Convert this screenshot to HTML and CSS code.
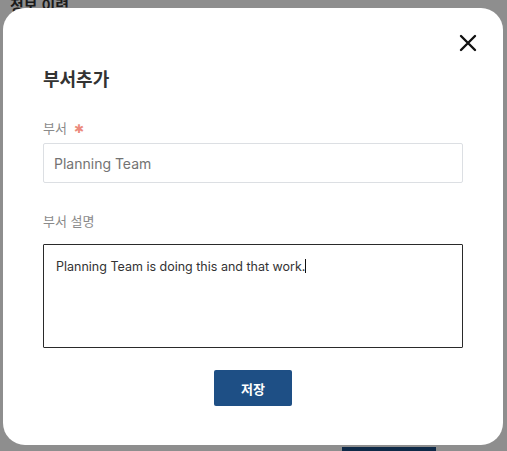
FILE: index.html
```html
<!DOCTYPE html>
<html lang="ko">
<head>
<meta charset="utf-8">
<link rel="stylesheet" href="styles.css">
</head>
<body>
<div class="page">
  <div class="page-title">정보 이력</div>
  <div class="page-btn"></div>
</div>
<div class="overlay">
  <div class="modal">
    <div class="modal-head">
      <button class="close" aria-label="닫기">
        <svg width="18" height="18" viewBox="0 0 18 18"><path d="M2 2L16 16M16 2L2 16" stroke="#111" stroke-width="2.4" stroke-linecap="round"/></svg>
      </button>
    </div>
    <h2 class="title">부서추가</h2>
    <div class="field">
      <label class="label">부서 <span class="req">✱</span></label>
      <div class="input">Planning Team</div>
    </div>
    <div class="field field-2">
      <label class="label">부서 설명</label>
      <div class="textarea">Planning Team is doing this and that work.<span class="caret"></span></div>
    </div>
    <div class="actions">
      <button class="save">저장</button>
    </div>
  </div>
</div>
</body>
</html>
```
FILE: styles.css
```css
* { box-sizing: border-box; }
html, body { margin: 0; padding: 0; }
body {
  width: 507px;
  height: 451px;
  overflow: hidden;
  background: #8e8e8e;
  font-family: Inter, "Noto Sans CJK KR", sans-serif;
  position: relative;
}
.page { position: relative; height: 451px; }
.page-title {
  position: absolute;
  left: 10px;
  top: -6px;
  font-size: 15px;
  font-weight: 600;
  color: #1b1b1b;
}
.page-btn {
  position: absolute;
  left: 342px;
  top: 447px;
  width: 94px;
  height: 10px;
  background: #0f2a48;
}
.overlay {
  position: absolute;
  left: 3px;
  top: 8px;
}
.modal {
  width: 500px;
  height: 437px;
  background: #fff;
  border-radius: 22px;
  padding: 24px 40px 0 40px;
  display: flex;
  flex-direction: column;
}
.modal-head {
  display: flex;
  justify-content: flex-end;
  margin-right: -15px;
  height: 22px;
}
.close {
  border: 0;
  background: none;
  padding: 0;
  width: 20px;
  height: 22px;
  display: flex;
  align-items: center;
  justify-content: center;
  cursor: pointer;
}
.title {
  margin: 14px 0 0 0;
  font-size: 18px;
  font-weight: 600;
  color: #333;
  line-height: 24px;
}
.field { margin-top: 27px; display: flex; flex-direction: column; }
.field-2 { margin-top: 29px; }
.label {
  font-size: 13px;
  color: #8a8a8a;
  line-height: 18px;
}
.req { color: #ec8a7c; margin-left: 3px; font-size: 12px; }
.input {
  margin-top: 5px;
  height: 40px;
  border: 1px solid #dcdfe3;
  border-radius: 2px;
  padding: 0 10px;
  display: flex;
  align-items: center;
  font-size: 14px;
  color: #737373;
}
.textarea {
  margin-top: 14px;
  height: 104px;
  border: 1px solid #2a2a2a;
  border-radius: 1px;
  padding: 14px 12px;
  font-size: 12.5px;
  color: #333;
  line-height: 16px;
}
.caret {
  display: inline-block;
  width: 1px;
  height: 14px;
  background: #111;
  vertical-align: -2px;
}
.actions {
  display: flex;
  justify-content: center;
  margin-top: 22px;
}
.save {
  width: 78px;
  height: 36px;
  border: 0;
  border-radius: 2px;
  background: #1e4f85;
  color: #fff;
  font-family: Inter, "Noto Sans CJK KR", sans-serif;
  font-size: 13px;
  font-weight: 700;
}
```
